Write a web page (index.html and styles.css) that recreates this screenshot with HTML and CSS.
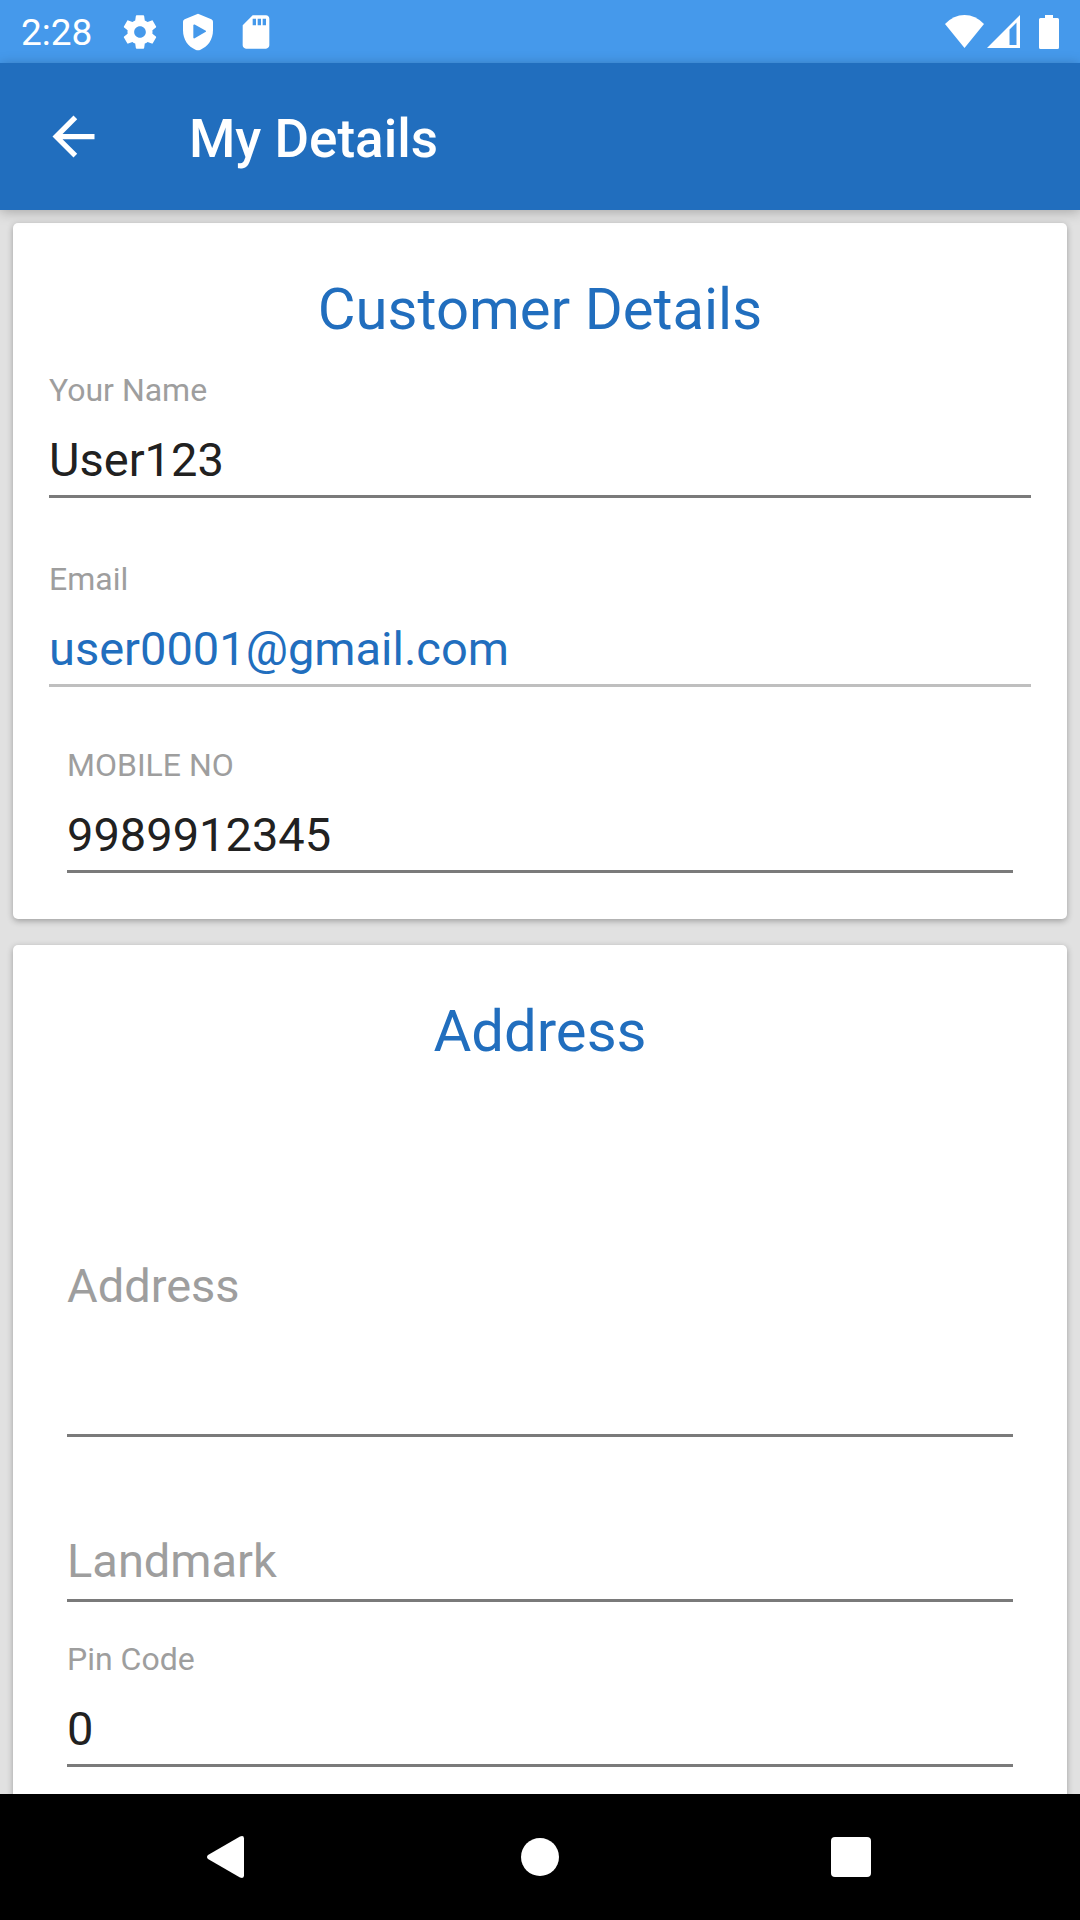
FILE: index.html
```html
<!DOCTYPE html>
<html lang="en">
<head>
<meta charset="utf-8">
<meta name="viewport" content="width=device-width, initial-scale=1">
<title>My Details</title>
<link rel="stylesheet" href="styles.css">
</head>
<body class="screen">
  <div class="status-bar">
    <span class="status-time">2:28</span>
    <div class="status-notifications">
      <svg class="status-icon" viewBox="0 0 24 24" aria-hidden="true"><path d="M19.43 12.98c.04-.32.07-.64.07-.98s-.03-.66-.07-.98l2.11-1.65c.19-.15.24-.42.12-.64l-2-3.46c-.12-.22-.39-.3-.61-.22l-2.49 1c-.52-.4-1.08-.73-1.69-.98l-.38-2.65C14.46 2.18 14.25 2 14 2h-4c-.25 0-.46.18-.49.42l-.38 2.65c-.61.25-1.17.59-1.69.98l-2.49-1c-.23-.09-.49 0-.61.22l-2 3.46c-.13.22-.07.49.12.64l2.11 1.65c-.04.32-.07.65-.07.98s.03.66.07.98l-2.11 1.65c-.19.15-.24.42-.12.64l2 3.46c.12.22.39.3.61.22l2.49-1c.52.4 1.08.73 1.69.98l.38 2.65c.03.24.24.42.49.42h4c.25 0 .46-.18.49-.42l.38-2.65c.61-.25 1.17-.59 1.69-.98l2.49 1c.23.09.49 0 .61-.22l2-3.46c.12-.22.07-.49-.12-.64l-2.11-1.65zM12 15.5c-1.93 0-3.5-1.57-3.5-3.5s1.57-3.5 3.5-3.5 3.5 1.57 3.5 3.5-1.57 3.5-3.5 3.5z"/></svg>
      <svg class="status-icon" viewBox="0 0 24 24" aria-hidden="true"><path fill-rule="evenodd" d="M12 1 4 4.3Q3 4.700 3 5.800V11c0 5.550 3.200 10 7.500 11.600Q12 23.200 13.500 22.600C17.800 21 21 16.550 21 11V5.800Q21 4.700 20 4.300ZM9.200 7.800Q9.400 7.300 10 7.500L16.700 11.300Q17.100 11.600 16.700 11.900L10 15.800Q9.400 16 9.200 15.500Z"/></svg>
      <svg class="status-icon" viewBox="0 0 24 24" aria-hidden="true"><path d="M18 2h-8L4.020 8 4 20c0 1.100.9 2 2 2h12c1.100 0 2-.9 2-2V4c0-1.100-.9-2-2-2zm-6 6h-2V4h2v4zm3 0h-2V4h2v4zm3 0h-2V4h2v4z"/></svg>
    </div>
    <div class="status-system">
      <svg class="wifi-icon" viewBox="0 0 39 33" aria-hidden="true"><path d="M19.500 33 0 9Q8.500 0 19.500 0T39 9Z"/></svg>
      <svg class="signal-icon" viewBox="0 0 33 33" aria-hidden="true"><path fill-rule="evenodd" d="M0 33H33V0ZM22.500 14.500 29.500 7.500V30H22.500Z"/></svg>
      <svg class="battery-icon" viewBox="0 0 20 34" aria-hidden="true"><path d="M6 0h8v3h4.500q1.500 0 1.500 1.500V32.500q0 1.500-1.500 1.500h-17Q0 34 0 32.500V4.500Q0 3 1.500 3H6Z"/></svg>
    </div>
  </div>

  <header class="app-bar">
    <button class="back-button" type="button" aria-label="Back">
      <svg class="back-icon" viewBox="0 0 24 24" aria-hidden="true"><path d="M20 11H7.830l5.590-5.590L12 4l-8 8 8 8 1.410-1.410L7.830 13H20v-2z"/></svg>
    </button>
    <h1 class="app-title">My Details</h1>
  </header>

  <main class="content">
    <form class="details-form">
      <section class="card">
        <h2 class="card-title">Customer Details</h2>
        <div class="field">
          <label class="field-label" for="name">Your Name</label>
          <input class="field-input" id="name" type="text" value="User123">
        </div>
        <div class="field field-spaced">
          <label class="field-label" for="email">Email</label>
          <input class="field-input" id="email" type="email" value="user0001@gmail.com" disabled>
        </div>
        <div class="field field-spaced field-inset">
          <label class="field-label" for="mobile">MOBILE NO</label>
          <input class="field-input" id="mobile" type="tel" value="9989912345">
        </div>
      </section>

      <section class="card">
        <h2 class="card-title">Address</h2>
        <div class="field field-inset field-address">
          <textarea class="field-input field-area" rows="3" placeholder="Address" aria-label="Address"></textarea>
        </div>
        <div class="field field-inset field-landmark">
          <input class="field-input field-tall" type="text" placeholder="Landmark" aria-label="Landmark">
        </div>
        <div class="field field-inset field-pin">
          <label class="field-label" for="pin">Pin Code</label>
          <input class="field-input" id="pin" type="text" inputmode="numeric" value="0">
        </div>
      </section>
    </form>
  </main>

  <nav class="nav-bar">
    <button class="nav-button" type="button" aria-label="Back">
      <svg class="nav-icon" viewBox="0 0 44 44" aria-hidden="true"><path d="M1 20 33 1.500Q37 0 37 3.500V40.500Q37 44 33 42.500L1 24Q-1 22 1 20Z"/></svg>
    </button>
    <button class="nav-button" type="button" aria-label="Home">
      <svg class="nav-icon" viewBox="0 0 44 44" aria-hidden="true"><circle cx="22" cy="22" r="19"/></svg>
    </button>
    <button class="nav-button" type="button" aria-label="Recent apps">
      <svg class="nav-icon" viewBox="0 0 44 44" aria-hidden="true"><rect x="2" y="2" width="40" height="40" rx="4"/></svg>
    </button>
  </nav>
</body>
</html>
```

FILE: styles.css
```css
:root {
  --primary: #216ebe;
  --status: #4599eb;
  --text: #212121;
  --hint: #9e9e9e;
  --line: #7a7a7a;
  --line-disabled: #bfbfbf;
}

* {
  box-sizing: border-box;
}

button,
input,
textarea {
  font-family: inherit;
  margin: 0;
  border: 0;
  padding: 0;
  border-radius: 0;
  background: none;
}

svg {
  display: block;
  fill: #fff;
}

.screen {
  display: flex;
  flex-direction: column;
  height: 100vh;
  margin: 0;
  background: #e1e1e1;
  color: var(--text);
  font-family: Roboto, sans-serif;
}

/* Status bar */
.status-bar {
  display: flex;
  flex: none;
  align-items: center;
  height: 63px;
  padding: 0 21px;
  background: var(--status);
  color: #fff;
}

.status-time {
  padding-top: 2px;
  font-size: 37px;
  line-height: 44px;
}

.status-notifications {
  display: flex;
  gap: 18px;
  margin-left: 28px;
}

.status-icon {
  width: 40px;
  height: 40px;
}

.status-system {
  display: flex;
  align-items: center;
  margin-left: auto;
}

.wifi-icon {
  width: 39px;
  height: 33px;
}

.signal-icon {
  width: 33px;
  height: 33px;
  margin-left: 3px;
}

.battery-icon {
  width: 20px;
  height: 34px;
  margin-left: 19px;
}

/* App bar */
.app-bar {
  display: flex;
  flex: none;
  align-items: center;
  gap: 84px;
  height: 147px;
  padding: 0 42px;
  background: var(--primary);
  color: #fff;
  box-shadow: 0 2px 12px rgba(0, 0, 0, 0.26);
  z-index: 1;
}

.back-icon {
  width: 63px;
  height: 63px;
}

.app-title {
  margin: 0;
  padding-top: 4px;
  font-size: 53px;
  font-weight: 500;
  line-height: 62px;
}

/* Scrolling form */
.content {
  flex: 1;
  min-height: 0;
  overflow-y: auto;
  scrollbar-width: none;
}

.details-form {
  display: flex;
  flex-direction: column;
  gap: 26px;
  padding: 13px;
}

.card {
  padding: 52px 36px 46px;
  border-radius: 5px;
  background: #fff;
  box-shadow: 0 2px 6px rgba(0, 0, 0, 0.3);
}

.card-title {
  margin: 0 0 28px;
  color: var(--primary);
  font-size: 58px;
  font-weight: 400;
  line-height: 68px;
  text-align: center;
}

.field {
  display: flex;
  flex-direction: column;
  gap: 23px;
}

.field-spaced {
  margin-top: 62px;
}

.field-inset {
  margin-right: 18px;
  margin-left: 18px;
}

.field-spaced.field-inset {
  margin-top: 59px;
}

.field-address {
  margin-top: 193px;
}

.field-landmark {
  margin-top: 96px;
}

.field-pin {
  margin-top: 38px;
}

.field-label {
  color: var(--hint);
  font-size: 32px;
  line-height: 38px;
}

.field-input {
  width: 100%;
  height: 66px;
  padding-bottom: 9px;
  border-bottom: 3px solid var(--line);
  color: var(--text);
  font-size: 47px;
  line-height: 54px;
  outline: 0;
}

.field-input::placeholder {
  color: var(--hint);
  opacity: 1;
}

.field-input:disabled {
  border-color: var(--line-disabled);
  color: var(--primary);
}

.field-tall {
  height: 69px;
  padding-bottom: 12px;
}

.field-area {
  display: block;
  height: auto;
  padding-bottom: 8px;
  line-height: 56px;
  resize: none;
}

/* System navigation */
.nav-bar {
  display: flex;
  flex: none;
  justify-content: space-between;
  height: 126px;
  padding: 0 166px;
  background: #000;
}

.nav-button {
  display: flex;
  align-items: center;
  justify-content: center;
  width: 126px;
}

.nav-icon {
  width: 44px;
  height: 44px;
}
```
